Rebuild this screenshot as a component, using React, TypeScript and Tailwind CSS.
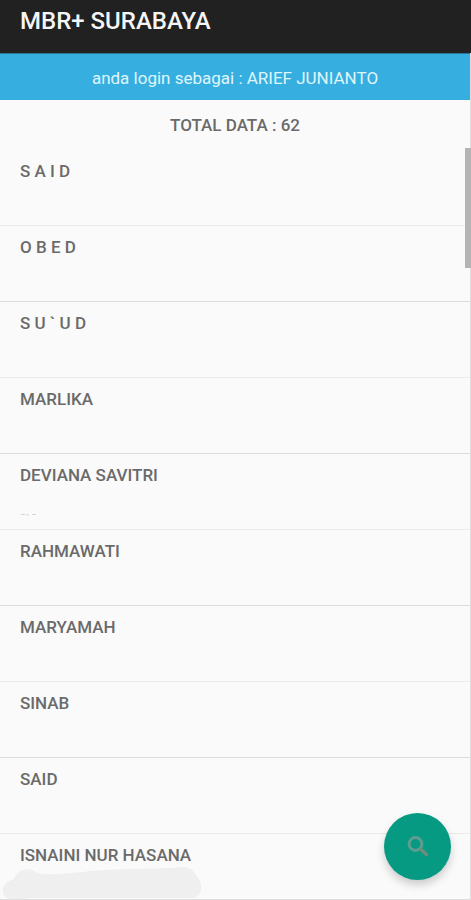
const people = [
  { name: 'S A I D' },
  { name: 'O B E D' },
  { name: 'S U ` U D' },
  { name: 'MARLIKA' },
  { name: 'DEVIANA SAVITRI', marks: true },
  { name: 'RAHMAWATI' },
  { name: 'MARYAMAH' },
  { name: 'SINAB' },
  { name: 'SAID' },
  { name: 'ISNAINI NUR HASANA', hidden: true },
]

function Marks() {
  return <svg className="mt-6 h-2 w-6" viewBox="0 0 24 8" aria-hidden="true">
    <path d="M1 3.500h4M6 4h3M12 3.500h4" stroke="#d4d4d4" strokeWidth="1" />
  </svg>
}

// painted over the address line
function Smudge() {
  return <svg className="absolute left-0 top-8 h-9 w-52" viewBox="0 0 208 36" aria-hidden="true">
    <path
      d="M3 27C1 20 7 15 14 13C17 3 30 0 37 7C52 10 66 7 82 6C112 2 144 4 183 1C193 1 196 9 199 14C204 22 200 31 193 32H30C17 34 5 35 3 27Z"
      fill="#efefef"
    />
  </svg>
}

function SearchIcon() {
  return <svg className="h-6 w-6" viewBox="0 0 24 24" fill="none" aria-hidden="true">
    <circle cx="9.500" cy="9" r="6.400" stroke="#5f9d8e" strokeWidth="3" />
    <path d="M14 13.500l7.500 7" stroke="#708c7c" strokeWidth="3.200" />
  </svg>
}

export default function App() {
  return <div className="relative flex h-screen flex-col overflow-hidden bg-[#fafafa] font-['Roboto',sans-serif] text-[#6a6a6a]">

    <header className="h-[53px] shrink-0 bg-[#212121] px-5 pt-1">
      <h1 className="text-[24px] leading-[34px] font-medium text-[#f5f5f5]">MBR+ SURABAYA</h1>
    </header>

    <div className="flex min-h-0 flex-1 flex-col border-r border-b border-[#dedede]">
      <p className="h-[47px] shrink-0 border-t border-[#2b7598] bg-[#37aee0] text-center text-[17px] leading-[48px] text-[#dff6fb]">
        anda login sebagai : ARIEF JUNIANTO
      </p>
      <p className="h-[50px] shrink-0 text-center text-[17px] leading-[50px] font-medium">TOTAL DATA : 62</p>

      <ul className="min-h-0 flex-1 overflow-hidden">
        {people.map((p, i) => (
          <li key={i} className="relative h-[76px] border-b border-[#ebebeb] px-5 pt-[9px] even:border-[#dcdcdc]">
            <div className="text-[17px] leading-6 font-medium">{p.name}</div>
            {p.marks && <Marks />}
            {p.hidden && <Smudge />}
          </li>
        ))}
      </ul>
    </div>

    <div className="absolute right-0 top-[148px] h-[120px] w-[6px] bg-[#b4b4b4]" />

    <button
      type="button"
      aria-label="Cari"
      className="absolute right-5 bottom-5 flex h-[67px] w-[67px] items-center justify-center rounded-full bg-[#079a82] shadow-[0_5px_9px_rgba(0,0,0,0.18)]"
    >
      <SearchIcon />
    </button>
  </div>
}
